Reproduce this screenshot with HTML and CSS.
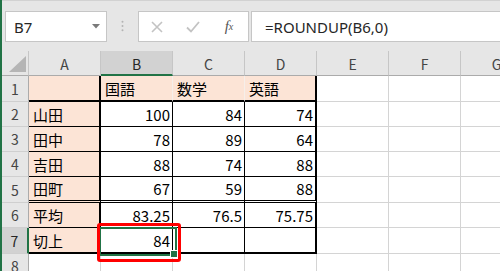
FILE: index.html
```html
<!DOCTYPE html>
<html lang="ja">
<head>
<meta charset="utf-8">
<title>ROUNDUP</title>
<link rel="stylesheet" href="styles.css">
</head>
<body>
<div class="app">
  <div class="toolbar">
    <div class="namebox">
      <span class="ref">B7</span>
      <svg class="caret" width="8" height="5" viewBox="0 0 8 5"><path d="M0 0H8L4 4.5Z" fill="#7a7a7a"/></svg>
    </div>
    <div class="grip">
      <svg width="3" height="31" viewBox="0 0 3 31"><circle cx="1.5" cy="10.7" r="1" fill="#b4b4b4"/><circle cx="1.5" cy="15" r="1" fill="#b4b4b4"/><circle cx="1.5" cy="19.3" r="1" fill="#b4b4b4"/></svg>
    </div>
    <div class="fbtns">
      <span class="btn"><svg width="12" height="12" viewBox="0 0 12 12"><path d="M1 1L11 11M11 1L1 11" stroke="#c3c3c3" stroke-width="1.6" fill="none"/></svg></span>
      <span class="btn"><svg width="14" height="12" viewBox="0 0 14 12"><path d="M1 6.5L5 10.5L13 1" stroke="#c3c3c3" stroke-width="1.8" fill="none"/></svg></span>
      <span class="btn fx"><i>f</i><sub>x</sub></span>
    </div>
    <div class="formula">=ROUNDUP(B6,0)</div>
  </div>

  <div class="sheet">
    <div class="corner"><svg width="27" height="25" viewBox="0 0 27 25"><path d="M7 21H24V5Z" fill="#b5b5b5"/></svg></div>
    <div class="ch">A</div>
    <div class="ch sel">B</div>
    <div class="ch">C</div>
    <div class="ch">D</div>
    <div class="ch">E</div>
    <div class="ch">F</div>
    <div class="ch">G</div>

    <div class="rh">1</div>
    <div class="c pk BR BB"></div>
    <div class="c pk fr BB txt">国語</div>
    <div class="c pk fr BB txt">数学</div>
    <div class="c pk BR BB txt">英語</div>
    <div class="c"></div>
    <div class="c"></div>
    <div class="c"></div>

    <div class="rh">2</div>
    <div class="c pk BR bb txt">山田</div>
    <div class="c br bb num">100</div>
    <div class="c br bb num">84</div>
    <div class="c BR bb num">74</div>
    <div class="c"></div>
    <div class="c"></div>
    <div class="c"></div>

    <div class="rh">3</div>
    <div class="c pk BR bb txt">田中</div>
    <div class="c br bb num">78</div>
    <div class="c br bb num">89</div>
    <div class="c BR bb num">64</div>
    <div class="c"></div>
    <div class="c"></div>
    <div class="c"></div>

    <div class="rh">4</div>
    <div class="c pk BR bb txt">吉田</div>
    <div class="c br bb num">88</div>
    <div class="c br bb num">74</div>
    <div class="c BR bb num">88</div>
    <div class="c"></div>
    <div class="c"></div>
    <div class="c"></div>

    <div class="rh">5</div>
    <div class="c pk BR DB txt">田町</div>
    <div class="c br DB num">67</div>
    <div class="c br DB num">59</div>
    <div class="c BR DB num">88</div>
    <div class="c"></div>
    <div class="c"></div>
    <div class="c"></div>

    <div class="rh">6</div>
    <div class="c pk BR bb txt">平均</div>
    <div class="c br bb num">83.25</div>
    <div class="c br bb num">76.5</div>
    <div class="c BR bb num">75.75</div>
    <div class="c"></div>
    <div class="c"></div>
    <div class="c"></div>

    <div class="rh sel">7</div>
    <div class="c pk BR BB txt">切上</div>
    <div class="c br BB num">84</div>
    <div class="c br BB num"></div>
    <div class="c BR BB num"></div>
    <div class="c"></div>
    <div class="c"></div>
    <div class="c"></div>

    <div class="rh">8</div>
    <div class="c"></div>
    <div class="c"></div>
    <div class="c"></div>
    <div class="c"></div>
    <div class="c"></div>
    <div class="c"></div>
    <div class="c"></div>

    <div class="selection"><span class="handle"></span></div>
    <div class="highlight"></div>
  </div>
</div>
</body>
</html>
```

FILE: styles.css
```css
html, body {
  margin: 0;
  padding: 0;
  background: #e6e6e6;
}

.app {
  width: 500px;
  height: 271px;
  overflow: hidden;
  box-sizing: border-box;
  border-left: 2px solid #217346;
  background: #e6e6e6;
}

/* ---------- formula bar ---------- */
.toolbar {
  height: 51px;
  box-sizing: border-box;
  border-top: 1px solid #d2d2d2;
  padding: 10px 0 0 3px;
  display: flex;
  align-items: flex-start;
  white-space: nowrap;
}

.namebox {
  width: 102px;
  height: 31px;
  box-sizing: border-box;
  border: 1px solid #c6c6c6;
  background: #fff;
  display: flex;
  align-items: center;
  justify-content: space-between;
  padding: 0 6px 0 8px;
  flex: none;
}

.ref {
  font-family: "Noto Sans", sans-serif;
  font-size: 15px;
  color: #262626;
}

.caret {
  display: block;
}

.grip {
  width: 3px;
  height: 31px;
  margin: 0 14px 0 14px;
  flex: none;
}
.grip svg { display: block; }

.fbtns {
  width: 111px;
  height: 31px;
  box-sizing: border-box;
  border: 1px solid #c6c6c6;
  background: #fff;
  display: flex;
  flex: none;
}

.btn {
  width: 36px;
  height: 29px;
  display: flex;
  align-items: center;
  justify-content: center;
}
.btn svg { display: block; }

.fx {
  font-family: "Liberation Serif", serif;
  color: #555;
  font-size: 15px;
  line-height: 1;
}
.fx i { font-style: italic; }
.fx sub {
  font-style: italic;
  font-size: 10px;
  vertical-align: -1px;
}

.formula {
  flex: 1;
  margin-left: 2px;
  height: 31px;
  box-sizing: border-box;
  border: 1px solid #c6c6c6;
  border-right: none;
  background: #fff;
  padding-left: 13px;
  display: flex;
  align-items: center;
  font-family: "Noto Sans", sans-serif;
  font-size: 15px;
  color: #262626;
}

/* ---------- sheet ---------- */
.sheet {
  position: relative;
  display: grid;
  grid-template-columns: 27px repeat(7, 72px);
  grid-template-rows: 25px 26px 25px 25px 25px 26px 25px 26px 25px;
  font-family: "Noto Sans CJK JP", "Noto Sans", sans-serif;
  font-size: 15px;
  color: #000;
  background: #fff;
}

.corner {
  background: #e6e6e6;
  box-sizing: border-box;
  border-right: 1px solid #c6c6c6;
  border-bottom: 1px solid #ababab;
}
.corner svg { display: block; }

.ch {
  background: #e6e6e6;
  box-sizing: border-box;
  border-right: 1px solid #c6c6c6;
  border-bottom: 1px solid #ababab;
  display: flex;
  align-items: center;
  justify-content: center;
  font-size: 14px;
  color: #444;
  padding-top: 2px;
}
.ch.sel {
  background: #d2d2d2;
  border-bottom: 2px solid #217346;
  color: #262626;
}

.rh {
  background: #e6e6e6;
  box-sizing: border-box;
  border-right: 1px solid #ababab;
  border-bottom: 1px solid #cfcfcf;
  display: flex;
  align-items: center;
  justify-content: center;
  font-size: 14px;
  color: #444;
}
.rh.sel {
  background: #d2d2d2;
  border-right: 2px solid #217346;
  color: #262626;
}

.c {
  box-sizing: border-box;
  border-right: 1px solid #d4d4d4;
  border-bottom: 1px solid #d4d4d4;
  display: flex;
  align-items: center;
  line-height: 1;
  white-space: nowrap;
  overflow: hidden;
}

.pk { background: #fce4d6; }
.fr { border-right-color: #f6efea; }

.txt { padding-left: 4px; }
.num { justify-content: flex-end; padding-right: 2px; }

.br { border-right: 1px solid #000; }
.bb { border-bottom: 1px solid #000; }
.BR { border-right: 2px solid #000; }
.BB { border-bottom: 2px solid #000; }
.DB { border-bottom: 3px double #000; }

/* ---------- overlays ---------- */
.selection {
  position: absolute;
  left: 97px;
  top: 176px;
  width: 78px;
  height: 29px;
  box-sizing: border-box;
  border: 2px solid #217346;
}
.handle {
  position: absolute;
  right: -2px;
  bottom: -3px;
  width: 6px;
  height: 6px;
  background: #217346;
  box-shadow: 0 0 0 1px #fff;
}

.highlight {
  position: absolute;
  left: 95px;
  top: 172px;
  width: 84px;
  height: 39px;
  box-sizing: border-box;
  border: 3px solid #ff0000;
  border-radius: 3px;
}
```
